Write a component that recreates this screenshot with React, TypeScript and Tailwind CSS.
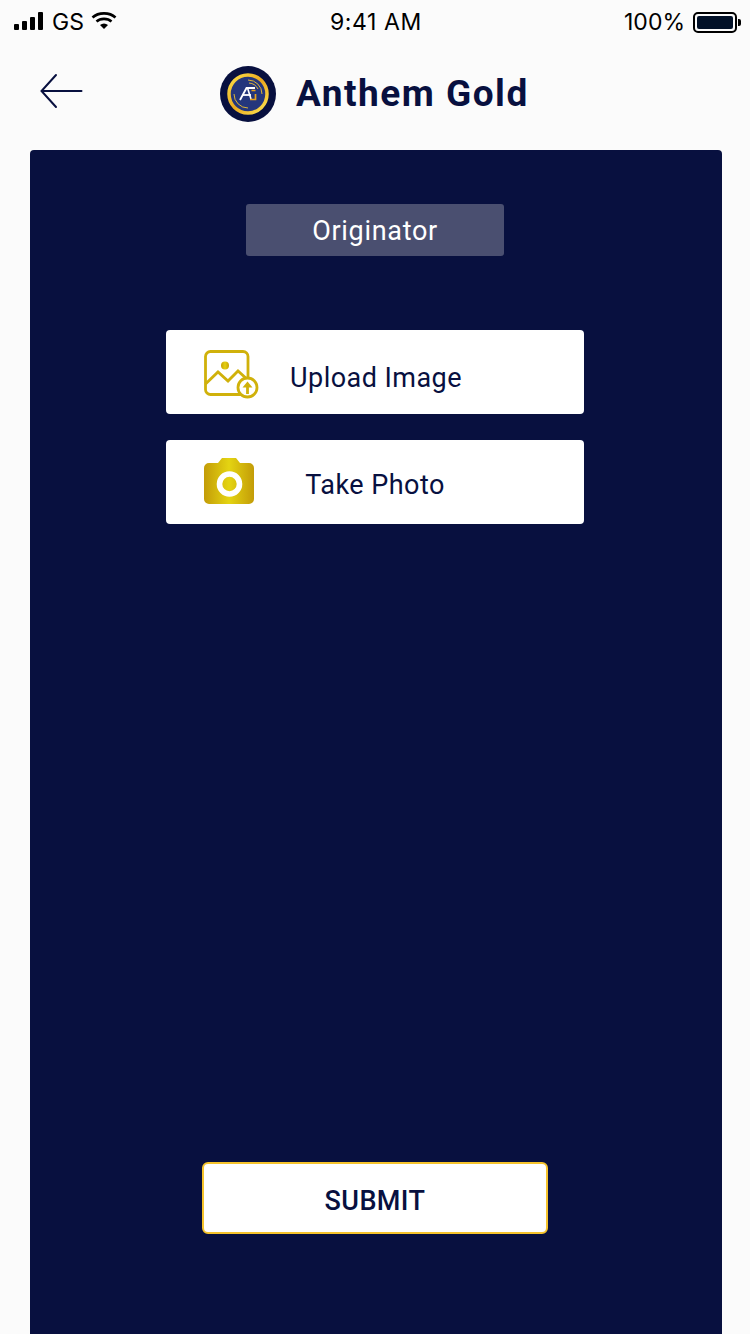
import React from 'react'

const navy = '#08103f'

const StatusBar = () => (
  <div className="flex items-center justify-between h-[44px] pl-[14px] pr-[9px] text-black text-[23px] font-['Inter',sans-serif]">
    <div className="flex items-center">
      {/* signal */}
      <div className="flex items-end gap-[3px] h-[18px] mb-[3px]">
        <span className="w-[5px] h-[6px] bg-black rounded-[1px]" />
        <span className="w-[5px] h-[9px] bg-black rounded-[1px]" />
        <span className="w-[5px] h-[13px] bg-black rounded-[1px]" />
        <span className="w-[5px] h-[18px] bg-black rounded-[1px]" />
      </div>
      <span className="ml-[9px] leading-none">GS</span>
      <svg className="ml-[7px] mb-[4px]" width="26" height="20" viewBox="0 0 26 20" fill="none">
        <path d="M1.5 7.5C7.5 2 18.5 2 24.5 7.5" stroke="#000" strokeWidth="2.6" />
        <path d="M5.5 11.5C9.5 8 16.5 8 20.5 11.5" stroke="#000" strokeWidth="2.6" />
        <path d="M9 15C11.5 13 14.5 13 17 15L13 19Z" fill="#000" />
      </svg>
    </div>
    <span className="ml-[11px] leading-none tracking-[0.6px]">9:41 AM</span>
    <div className="flex items-center">
      <span className="mr-[1px] leading-none">100%</span>
      <div className="ml-[7px] w-[44px] h-[21px] border-2 border-black rounded-[5px] p-[2px]">
        <div className="w-full h-full bg-[#021128] rounded-[2px]" />
      </div>
      <span className="ml-[1px] w-[3px] h-[7px] bg-black rounded-r-[2px]" />
    </div>
  </div>
)

const Logo = () => (
  <svg width="56" height="56" viewBox="0 0 56 56">
    <defs>
      <linearGradient id="logoRing" x1="0" y1="0" x2="1" y2="1">
        <stop offset="0" stopColor="#fbe04a" />
        <stop offset="0.5" stopColor="#eba81e" />
        <stop offset="1" stopColor="#fde553" />
      </linearGradient>
    </defs>
    <circle cx="28" cy="28" r="28" fill={navy} />
    <circle cx="28" cy="28" r="19" fill="#24367c" stroke="url(#logoRing)" strokeWidth="3.5" />
    <path d="M28 14A14 14 0 0 1 42 28" fill="none" stroke="#f2c230" strokeWidth="0.9" />
    <path d="M28 42A14 14 0 0 1 14 28" fill="none" stroke="#f2c230" strokeWidth="0.9" />
    <path d="M29 17A11 11 0 0 1 38 23" fill="none" stroke="#f2c230" strokeWidth="0.9" />
    <path d="M20 34L26.5 22H35" fill="none" stroke="#fff" strokeWidth="1.8" />
    <path d="M23 29H31" fill="none" stroke="#fff" strokeWidth="1.8" />
    <path d="M27.5 22L31 33" fill="none" stroke="#fff" strokeWidth="1.6" />
    <path d="M35.5 24.5H31.5M35.5 28V33.5H30" fill="none" stroke="#e9a21c" strokeWidth="1.7" />
  </svg>
)

const Header = () => (
  <div className="relative flex items-center h-[106px] pl-[40px]">
    <svg className="mb-[12px]" width="44" height="36" viewBox="0 0 44 36" fill="none">
      <path d="M41.5 18H2M16 2L1.5 18L16 34" stroke={navy} strokeWidth="2" strokeLinecap="round" />
    </svg>
    <div className="ml-[136px] mb-[6px] flex items-center gap-[20px]">
      <Logo />
      <span className="mb-[2px] text-[37px] leading-none font-bold tracking-[1.5px] text-[#08103f] font-['Roboto',sans-serif]">
        Anthem Gold
      </span>
    </div>
  </div>
)

const UploadIcon = () => (
  <svg width="56" height="50" viewBox="0 0 56 50" fill="none">
    <defs>
      <linearGradient id="goldA" x1="0" y1="0" x2="1" y2="0">
        <stop offset="0" stopColor="#c9a206" />
        <stop offset="0.5" stopColor="#e4d012" />
        <stop offset="1" stopColor="#c9a206" />
      </linearGradient>
    </defs>
    <path
      d="M38 44.5H6.5a5 5 0 0 1-5-5V6.5a5 5 0 0 1 5-5H39a5 5 0 0 1 5 5V31"
      stroke="#d0b10a"
      strokeWidth="2.8"
    />
    <path d="M1.5 34L14 22L24 31L34 21L44 30" stroke="#d0b10a" strokeWidth="2.8" />
    <circle cx="21" cy="15.5" r="4" fill="url(#goldA)" />
    <circle cx="43.5" cy="37.5" r="9.5" fill="#fff" stroke="#d0b10a" strokeWidth="2.8" />
    <path d="M43.5 44V35" stroke="#d0b10a" strokeWidth="2.8" />
    <path d="M38.5 37.5L43.5 31.5L48.5 37.5Z" fill="#d0b10a" />
  </svg>
)

const CameraIcon = () => (
  <svg width="50" height="46" viewBox="0 0 50 46">
    <defs>
      <linearGradient id="goldB" x1="0" y1="0" x2="1" y2="0">
        <stop offset="0" stopColor="#c39c08" />
        <stop offset="0.5" stopColor="#e4d412" />
        <stop offset="1" stopColor="#c39c08" />
      </linearGradient>
    </defs>
    <path
      d="M5 5H14L18 0H32L36 5H45a5 5 0 0 1 5 5V41a5 5 0 0 1-5 5H5a5 5 0 0 1-5-5V10a5 5 0 0 1 5-5Z"
      fill="url(#goldB)"
    />
    <circle cx="25.5" cy="26" r="10" fill="none" stroke="#fff" strokeWidth="5.6" />
  </svg>
)

const ActionButton = ({ icon, label, iconClass, labelClass }: { icon: React.ReactNode; label: string; iconClass: string; labelClass: string }) => (
  <button className="relative flex items-center justify-center w-[418px] h-[84px] bg-white rounded-[4px]">
    <span className={`absolute ${iconClass}`}>{icon}</span>
    <span className={`text-[27px] leading-none tracking-[0.45px] text-[#08103f] font-['Roboto',sans-serif] ${labelClass}`}>
      {label}
    </span>
  </button>
)

export default function App() {
  return (
    <div className="h-[1334px] overflow-hidden flex flex-col bg-[#fbfbfb]">
      <StatusBar />
      <Header />
      <main className="ml-[30px] mr-[28px] pr-[2px] flex-1 flex flex-col items-center bg-[#08103f] rounded-t-[4px] pt-[54px] pb-[100px]">
        <div className="flex items-center justify-center w-[258px] h-[52px] rounded-[3px] bg-[#4a4f70] text-white text-[27px] leading-none tracking-[0.7px] font-['Roboto',sans-serif]">
          <span className="mt-[2px]">Originator</span>
        </div>

        <div className="mt-[74px] flex flex-col gap-[26px]">
          <ActionButton icon={<UploadIcon />} label="Upload Image" iconClass="left-[38px] top-[20px]" labelClass="mt-[12px] ml-[2px]" />
          <ActionButton icon={<CameraIcon />} label="Take Photo" iconClass="left-[38px] top-[18px]" labelClass="mt-[7px]" />
        </div>

        <button className="mt-auto w-[346px] h-[72px] pt-[6px] bg-white border-2 border-[#f5c32c] rounded-[6px] text-[#08103f] text-[27px] tracking-[0.4px] font-medium font-['Roboto',sans-serif]">
          SUBMIT
        </button>
      </main>
    </div>
  )
}
